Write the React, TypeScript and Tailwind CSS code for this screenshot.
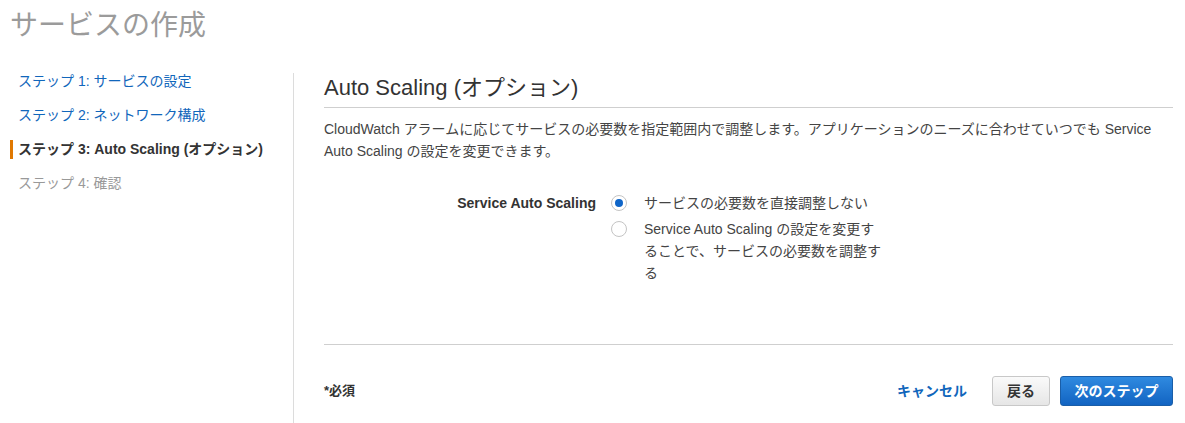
import { useState } from "react";

const steps = [
  { label: "ステップ 1: サービスの設定", state: "done" },
  { label: "ステップ 2: ネットワーク構成", state: "done" },
  { label: "ステップ 3: Auto Scaling (オプション)", state: "active" },
  { label: "ステップ 4: 確認", state: "todo" },
];

function Radio({ checked, onClick }: { checked: boolean; onClick: () => void }) {
  return (
    <button
      type="button"
      onClick={onClick}
      className="mt-[3px] flex h-4 w-4 shrink-0 items-center justify-center rounded-full border border-[#c4c4c4] bg-white"
    >
      {checked && <span className="h-2 w-2 rounded-full bg-[#0f65c8]" />}
    </button>
  );
}

export default function App() {
  const [mode, setMode] = useState<"none" | "auto">("none");

  return (
    <div
      className="h-[423px] w-full overflow-hidden bg-white text-[#444]"
      style={{ fontFamily: '"Liberation Sans", Arial, "Noto Sans CJK JP", sans-serif' }}
    >
      <h1 className="h-[64px] pl-[10px] pt-[6px] text-[28px] font-normal leading-[40px] text-[#9b9b9b]">
        サービスの作成
      </h1>

      <div className="flex">
        <nav className="w-[293px] shrink-0">
          {steps.map((s) => (
            <div key={s.label} className="flex h-[34px] items-center">
              <span
                className={
                  s.state === "active"
                    ? "ml-[10px] mr-[5px] h-[19px] w-[3px] bg-[#e07800]"
                    : "ml-[10px] mr-[5px] h-[19px] w-[3px]"
                }
              />
              <span
                className={
                  s.state === "active"
                    ? "text-[14px] font-bold text-[#333]"
                    : s.state === "done"
                      ? "text-[14px] text-[#1166bb]"
                      : "text-[14px] text-[#999]"
                }
              >
                {s.label}
              </span>
            </div>
          ))}
        </nav>

        <main className="mt-[9px] h-[350px] flex-1 border-l border-[#dcdcdc] pl-[30px] pr-[12px]">
          <h2 className="border-b border-[#cfcfcf] pb-[5px] pt-[1px] text-[22px] font-normal leading-[28px] text-[#333]">
            Auto Scaling (オプション)
          </h2>
          <p className="mt-[10px] text-[14px] leading-[22px] text-[#444]">
            CloudWatch アラームに応じてサービスの必要数を指定範囲内で調整します。アプリケーションのニーズに合わせていつでも Service
            <br />
            Auto Scaling の設定を変更できます。
          </p>

          <div className="mt-[30px] flex">
            <div className="w-[272px] shrink-0 text-right text-[14px] font-bold leading-[22px] text-[#333]">
              Service Auto Scaling
            </div>
            <div className="ml-[15px] flex flex-col gap-[4px]">
              <label className="flex gap-[17px]">
                <Radio checked={mode === "none"} onClick={() => setMode("none")} />
                <span className="text-[14px] leading-[22px] text-[#444]">サービスの必要数を直接調整しない</span>
              </label>
              <label className="flex gap-[17px]">
                <Radio checked={mode === "auto"} onClick={() => setMode("auto")} />
                <span className="whitespace-nowrap text-[14px] leading-[22px] text-[#444]">
                  Service Auto Scaling の設定を変更す
                  <br />
                  ることで、サービスの必要数を調整す
                  <br />る
                </span>
              </label>
            </div>
          </div>

          <div className="mt-[60px] border-t border-[#cfcfcf]" />

          <div className="mt-[31px] flex h-[30px] items-center">
            <span className="text-[13px] font-bold text-[#333]">*必須</span>
            <div className="ml-auto flex items-center">
              <button type="button" className="text-[14px] font-bold text-[#1166bb]">
                キャンセル
              </button>
              <button
                type="button"
                className="ml-[25px] h-[30px] w-[58px] rounded-[3px] border border-[#c8c8c8] bg-gradient-to-b from-[#fafafa] to-[#e6e6e6] text-[14px] font-bold text-[#333]"
              >
                戻る
              </button>
              <button
                type="button"
                className="ml-[10px] h-[30px] w-[113px] rounded-[3px] border border-[#1a5ea8] bg-gradient-to-b from-[#2f8ae0] to-[#1264c2] text-[14px] font-bold text-white"
              >
                次のステップ
              </button>
            </div>
          </div>
        </main>
      </div>
    </div>
  );
}
